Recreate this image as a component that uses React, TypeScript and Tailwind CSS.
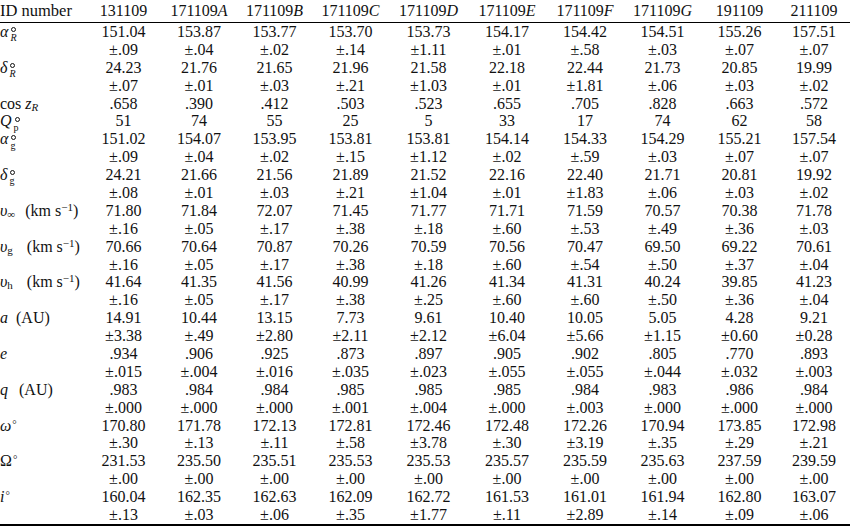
import React from 'react'

const GRID = 'grid grid-cols-[86px_75px_76px_75px_77px_79px_78px_78px_77px_77px_72px]'

// TeX-like x^\circ_b : a small ring above a subscript
function Stack({ sub, subItalic = false }: { sub: string; subItalic?: boolean }) {
  return (
    <span className="inline-flex flex-col items-start align-middle ml-[2px] translate-y-[2px]">
      <span className="block w-[5px] h-[5px] rounded-full border border-[#111] ml-[1px] mb-[1px]" />
      <span className={`text-[10px] leading-[10px] ${subItalic ? 'italic' : 'not-italic'}`}>{sub}</span>
    </span>
  )
}

const Deg = () => <sup className="text-[11px] relative -top-[3px] ml-[1px]">°</sup>

const kms = (
  <span className="ml-[10px]">
    (km s<sup className="text-[11px] relative -top-[5px]">−1</sup>)
  </span>
)

const headers: [string, string][] = [
  ['131109', ''],
  ['171109', 'A'],
  ['171109', 'B'],
  ['171109', 'C'],
  ['171109', 'D'],
  ['171109', 'E'],
  ['171109', 'F'],
  ['171109', 'G'],
  ['191109', ''],
  ['211109', ''],
]

type Param = { label: React.ReactNode; values: string[]; errors?: string[] }

const params: Param[] = [
  {
    label: <><i>α</i><Stack sub="R" subItalic /></>,
    values: ['151.04', '153.87', '153.77', '153.70', '153.73', '154.17', '154.42', '154.51', '155.26', '157.51'],
    errors: ['±.09', '±.04', '±.02', '±.14', '±1.11', '±.01', '±.58', '±.03', '±.07', '±.07'],
  },
  {
    label: <><i>δ</i><Stack sub="R" subItalic /></>,
    values: ['24.23', '21.76', '21.65', '21.96', '21.58', '22.18', '22.44', '21.73', '20.85', '19.99'],
    errors: ['±.07', '±.01', '±.03', '±.21', '±1.03', '±.01', '±1.81', '±.06', '±.03', '±.02'],
  },
  {
    label: <>cos <i>z</i><sub className="italic text-[11px] relative top-[2px]">R</sub></>,
    values: ['.658', '.390', '.412', '.503', '.523', '.655', '.705', '.828', '.663', '.572'],
  },
  {
    label: <><i>Q</i><Stack sub="p" /></>,
    values: ['51', '74', '55', '25', '5', '33', '17', '74', '62', '58'],
  },
  {
    label: <><i>α</i><Stack sub="g" /></>,
    values: ['151.02', '154.07', '153.95', '153.81', '153.81', '154.14', '154.33', '154.29', '155.21', '157.54'],
    errors: ['±.09', '±.04', '±.02', '±.15', '±1.12', '±.02', '±.59', '±.03', '±.07', '±.07'],
  },
  {
    label: <><i>δ</i><Stack sub="g" /></>,
    values: ['24.21', '21.66', '21.56', '21.89', '21.52', '22.16', '22.40', '21.71', '20.81', '19.92'],
    errors: ['±.08', '±.01', '±.03', '±.21', '±1.04', '±.01', '±1.83', '±.06', '±.03', '±.02'],
  },
  {
    label: <><i>υ</i><sub className="text-[11px] relative top-[2px]">∞</sub>{kms}</>,
    values: ['71.80', '71.84', '72.07', '71.45', '71.77', '71.71', '71.59', '70.57', '70.38', '71.78'],
    errors: ['±.16', '±.05', '±.17', '±.38', '±.18', '±.60', '±.53', '±.49', '±.36', '±.03'],
  },
  {
    label: <><i>υ</i><sub className="text-[11px] relative top-[2px]">g</sub><span className="ml-[4px]" />{kms}</>,
    values: ['70.66', '70.64', '70.87', '70.26', '70.59', '70.56', '70.47', '69.50', '69.22', '70.61'],
    errors: ['±.16', '±.05', '±.17', '±.38', '±.18', '±.60', '±.54', '±.50', '±.37', '±.04'],
  },
  {
    label: <><i>υ</i><sub className="text-[11px] relative top-[2px]">h</sub><span className="ml-[4px]" />{kms}</>,
    values: ['41.64', '41.35', '41.56', '40.99', '41.26', '41.34', '41.31', '40.24', '39.85', '41.23'],
    errors: ['±.16', '±.05', '±.17', '±.38', '±.25', '±.60', '±.60', '±.50', '±.36', '±.04'],
  },
  {
    label: <><i>a</i><span className="ml-[8px]">(AU)</span></>,
    values: ['14.91', '10.44', '13.15', '7.73', '9.61', '10.40', '10.05', '5.05', '4.28', '9.21'],
    errors: ['±3.38', '±.49', '±2.80', '±2.11', '±2.12', '±6.04', '±5.66', '±1.15', '±0.60', '±0.28'],
  },
  {
    label: <i>e</i>,
    values: ['.934', '.906', '.925', '.873', '.897', '.905', '.902', '.805', '.770', '.893'],
    errors: ['±.015', '±.004', '±.016', '±.035', '±.023', '±.055', '±.055', '±.044', '±.032', '±.003'],
  },
  {
    label: <><i>q</i><span className="ml-[11px]">(AU)</span></>,
    values: ['.983', '.984', '.984', '.985', '.985', '.985', '.984', '.983', '.986', '.984'],
    errors: ['±.000', '±.000', '±.000', '±.001', '±.004', '±.000', '±.003', '±.000', '±.000', '±.000'],
  },
  {
    label: <><i>ω</i><Deg /></>,
    values: ['170.80', '171.78', '172.13', '172.81', '172.46', '172.48', '172.26', '170.94', '173.85', '172.98'],
    errors: ['±.30', '±.13', '±.11', '±.58', '±3.78', '±.30', '±3.19', '±.35', '±.29', '±.21'],
  },
  {
    label: <>Ω<Deg /></>,
    values: ['231.53', '235.50', '235.51', '235.53', '235.53', '235.57', '235.59', '235.63', '237.59', '239.59'],
    errors: ['±.00', '±.00', '±.00', '±.00', '±.00', '±.00', '±.00', '±.00', '±.00', '±.00'],
  },
  {
    label: <><i>i</i><Deg /></>,
    values: ['160.04', '162.35', '162.63', '162.09', '162.72', '161.53', '161.01', '161.94', '162.80', '163.07'],
    errors: ['±.13', '±.03', '±.06', '±.35', '±1.77', '±.11', '±2.89', '±.14', '±.09', '±.06'],
  },
]

function Row({ label, cells }: { label?: React.ReactNode; cells: string[] }) {
  return (
    <div className={`${GRID} h-[17.9px] leading-[17.9px]`}>
      <div className="whitespace-nowrap">{label}</div>
      {cells.map((c, i) => (
        <div key={i} className="text-center whitespace-nowrap">{c}</div>
      ))}
    </div>
  )
}

export default function App() {
  return (
    <div className="w-[850px] h-[528px] overflow-hidden bg-white text-[#111] text-[16px] font-['Liberation_Serif','Times_New_Roman',serif]">
      {/* header */}
      <div className={`${GRID} h-[23px] leading-[22px] border-b border-black`}>
        <div className="whitespace-nowrap text-[16.5px]">ID number</div>
        {headers.map(([n, s], i) => (
          <div key={i} className="text-center whitespace-nowrap">
            {n}
            {s && <i>{s}</i>}
          </div>
        ))}
      </div>

      {/* body */}
      <div className="border-b-2 border-black">
        {params.map((p, i) => (
          <React.Fragment key={i}>
            <Row label={p.label} cells={p.values} />
            {p.errors && <Row cells={p.errors} />}
          </React.Fragment>
        ))}
      </div>
    </div>
  )
}
